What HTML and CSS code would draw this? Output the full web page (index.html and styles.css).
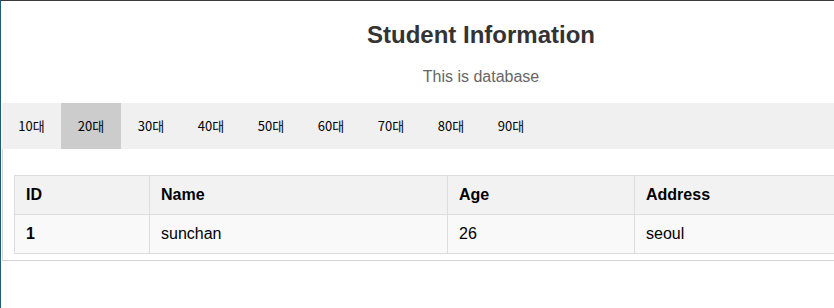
FILE: index.html
```html
<!DOCTYPE html>
<html lang="ko">
<head>
  <meta charset="UTF-8" />
  <meta name="viewport" content="width=device-width, initial-scale=1.0"/>
  <title>Student Information</title>
  <link rel="stylesheet" href="styles.css">
</head>
<body>

  <div class="page">
    <!-- Header -->
    <div class="header">
      <h1>Student Information</h1>
      <p class="subtitle">This is database</p>
    </div>

    <!-- Age filter -->
    <div class="age-nav">
      <a href="#">10대</a>
      <a href="#" class="active">20대</a>
      <a href="#">30대</a>
      <a href="#">40대</a>
      <a href="#">50대</a>
      <a href="#">60대</a>
      <a href="#">70대</a>
      <a href="#">80대</a>
      <a href="#">90대</a>
    </div>

    <!-- Student table -->
    <div class="content">
      <table class="student-table">
        <colgroup>
          <col class="col-id">
          <col class="col-name">
          <col class="col-age">
          <col>
        </colgroup>
        <thead>
          <tr>
            <th>ID</th>
            <th>Name</th>
            <th>Age</th>
            <th>Address</th>
          </tr>
        </thead>
        <tbody>
          <tr>
            <td class="id">1</td>
            <td>sunchan</td>
            <td>26</td>
            <td>seoul</td>
          </tr>
        </tbody>
      </table>
    </div>
  </div>

</body>
</html>
```

FILE: styles.css
```css
* {
  margin: 0;
  padding: 0;
  box-sizing: border-box;
}

html, body {
  overflow: hidden;
}

body {
  font-family: 'Liberation Sans', Arial, sans-serif;
  background-color: #fff;
  border-top: 1px solid #3a3a3a;
  border-left: 1px solid #1f5b7a;
  height: 308px;
}

.page {
  width: 958px;
  margin-left: 1px;
}

.header {
  text-align: center;
}

.header h1 {
  margin-top: 20px;
  font-size: 24px;
  line-height: 28px;
  color: #333;
}

.subtitle {
  margin-top: 19px;
  font-size: 16px;
  line-height: 18px;
  color: #666;
}

.age-nav {
  margin-top: 17px;
  display: flex;
  background-color: #f0f0f0;
  height: 46px;
}

.age-nav a {
  width: 60px;
  line-height: 46px;
  text-align: center;
  color: #000;
  text-decoration: none;
  font-family: 'Noto Sans CJK KR', 'DejaVu Sans', sans-serif;
  font-size: 13px;
}

.age-nav a:first-child {
  width: 59px;
}

.age-nav a.active,
.age-nav a:hover {
  background-color: #ccc;
}

.content {
  border: 1px solid #d4d4d4;
  border-top: none;
  padding: 26px 11px 6px;
}

.student-table {
  width: 100%;
  border-collapse: collapse;
  table-layout: fixed;
}

.col-id {
  width: 135px;
}

.col-name {
  width: 298px;
}

.col-age {
  width: 187px;
}

.student-table th,
.student-table td {
  border: 1px solid #ddd;
  padding: 10px 11px;
  font-size: 16px;
  line-height: 18px;
  text-align: left;
  color: #000;
}

.student-table th {
  background-color: #f2f2f2;
}

.student-table td {
  background-color: #f9f9f9;
}

.student-table td.id {
  font-weight: bold;
}
```
